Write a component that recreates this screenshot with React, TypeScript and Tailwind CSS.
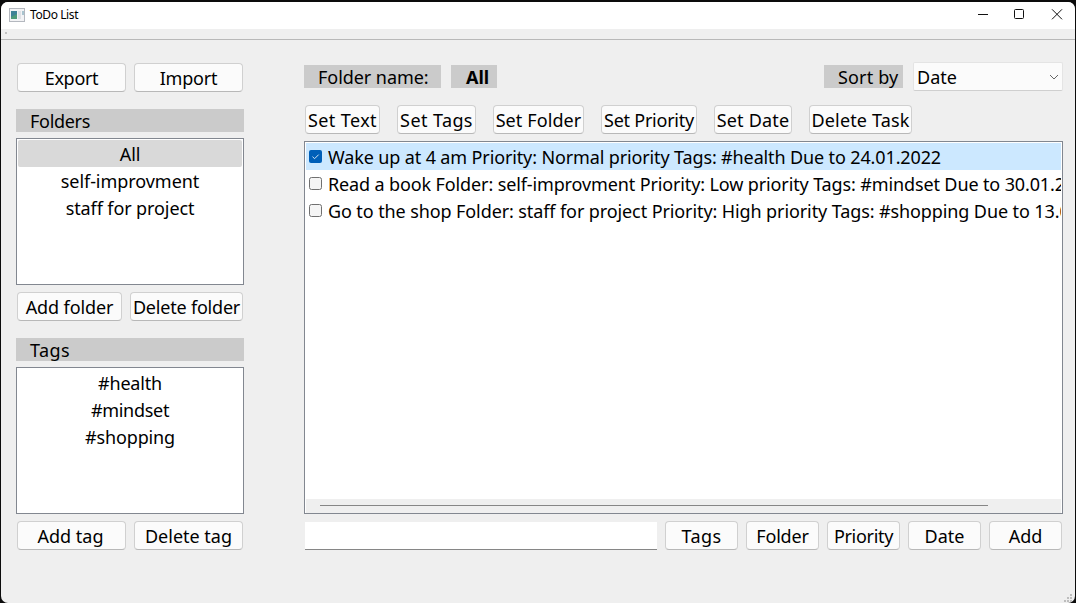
import { useState } from 'react';

const uiFont = "font-['Noto_Sans','Open_Sans',sans-serif]";

function Button({ label, className, spacing = 'tracking-[-0.3px]' }: { label: string; className: string; spacing?: string }) {
  return (
    <button
      className={`flex h-[29px] shrink-0 items-center justify-center whitespace-nowrap rounded-[4px] border border-[#d0d0d0] border-b-[#b8b8b8] bg-[#fbfbfb] pt-px text-[18px] leading-none ${className}`}
    >
      <span className={spacing}>{label}</span>
    </button>
  );
}

function Caption({ text, className, spacing = 'tracking-[-0.3px]' }: { text: string; className: string; spacing?: string }) {
  return (
    <div className={`flex h-[23px] shrink-0 items-center whitespace-nowrap bg-[#cbcbcb] pl-[14px] text-[18px] leading-none ${className}`}>
      <span className={spacing}>{text}</span>
    </div>
  );
}

type Item = { text: string; spacing: string };

function ListBox({ items, selected }: { items: Item[]; selected?: number }) {
  return (
    <ul className="h-[147px] w-[228px] shrink-0 border border-[#828790] bg-white p-px">
      {items.map((item, i) => (
        <li
          key={item.text}
          className={`flex h-[27px] items-center justify-center rounded-[2px] pt-px text-[18px] leading-none ${i === selected ? 'bg-[#d9d9d9]' : ''}`}
        >
          <span className={item.spacing}>{item.text}</span>
        </li>
      ))}
    </ul>
  );
}

function CheckBox({ checked }: { checked: boolean }) {
  return (
    <svg width="13" height="13" viewBox="0 0 13 13" className="shrink-0">
      {checked ? (
        <>
          <rect width="13" height="13" rx="2" fill="#005fb8" />
          <path d="M3.5 6.7 5.6 8.7 9.7 4.6" fill="none" stroke="#d5e6f5" strokeWidth="1" />
        </>
      ) : (
        <rect x="0.5" y="0.5" width="12" height="12" rx="2" fill="#f5f5f5" stroke="#707070" />
      )}
    </svg>
  );
}

const folders: Item[] = [
  { text: 'All', spacing: 'tracking-[-0.1px]' },
  { text: 'self-improvment', spacing: 'tracking-[-0.05px]' },
  { text: 'staff for project', spacing: 'tracking-[-0.1px]' },
];

const tags: Item[] = [
  { text: '#health', spacing: 'tracking-[-0.2px]' },
  { text: '#mindset', spacing: 'tracking-[-0.3px]' },
  { text: '#shopping', spacing: 'tracking-[-0.15px]' },
];

const initialTasks = [
  { text: 'Wake up at 4 am Priority: Normal priority Tags: #health Due to 24.01.2022', done: true, spacing: 'tracking-[-0.13px]' },
  { text: 'Read a book Folder: self-improvment Priority: Low priority Tags: #mindset Due to 30.01.2022', done: false, spacing: 'tracking-[-0.125px]' },
  { text: 'Go to the shop Folder: staff for project Priority: High priority Tags: #shopping Due to 13.01.2022', done: false, spacing: 'tracking-[-0.1px]' },
];

function TitleBar() {
  return (
    <header className="flex h-[27px] shrink-0 items-center bg-white pl-2">
      <svg width="16" height="14" viewBox="0 0 16 14" className="-mt-[2px]">
        <rect x="0.5" y="0.5" width="15" height="13" fill="#f3f3f5" stroke="#b4b8bf" />
        <rect x="2" y="3" width="6" height="8" fill="#3f8296" />
        <path d="M2 9l6-3v5H2z" fill="#4f9a78" />
        <rect x="9" y="3" width="3" height="8" fill="#dfe1e5" />
        <rect x="13" y="3" width="2" height="4" fill="#a9c4cf" />
      </svg>
      <span className="-mt-[2px] ml-[5px] text-[12px] leading-none tracking-[-0.4px]">ToDo List</span>
      <svg width="98" height="27" viewBox="0 0 98 27" className="ml-auto mr-[7px]" fill="none" stroke="#111">
        <path d="M8 12.5h10" />
        <rect x="44.5" y="7.5" width="9" height="9" rx="1" />
        <path d="M82 7.3l10 10M92 7.3l-10 10" />
      </svg>
    </header>
  );
}

export default function App() {
  const [tasks] = useState(initialTasks);
  return (
    <div className={`h-[603px] w-[1076px] overflow-hidden bg-[#0c0c0c] px-px pt-[2px] text-black ${uiFont}`}>
      <div className="relative flex h-[601px] flex-col overflow-hidden rounded-[7px] bg-[#efefef]">
        <TitleBar />
        <div className="h-[11px] shrink-0 border-b border-[#b8b8b8] pl-1 pt-[3px]">
          <div className="h-[2px] w-[2px] bg-[#c2c2c2]" />
        </div>

        <main className="flex items-start gap-[60px] pl-[15px] pt-[22px]">
          <aside className="flex w-[228px] shrink-0 flex-col">
            <div className="mt-px flex gap-2 pl-px">
              <Button label="Export" className="w-[109px]" />
              <Button label="Import" className="w-[109px]" spacing="tracking-[-0.2px]" />
            </div>
            <Caption text="Folders" className="mt-[17px]" />
            <div className="h-[6px]" />
            <ListBox items={folders} selected={0} />
            <div className="mt-[7px] flex gap-2 pl-px">
              <Button label="Add folder" className="w-[105px]" spacing="tracking-[-0.1px]" />
              <Button label="Delete folder" className="w-[113px]" spacing="tracking-[-0.2px]" />
            </div>
            <Caption text="Tags" className="mt-[17px]" spacing="tracking-[0.4px]" />
            <div className="h-[6px]" />
            <ListBox items={tags} />
            <div className="mt-[7px] flex gap-2 pl-px">
              <Button label="Add tag" className="w-[109px] pr-[2px]" spacing="tracking-[0px]" />
              <Button label="Delete tag" className="w-[109px]" spacing="tracking-[0px]" />
            </div>
          </aside>

          <section className="flex w-[759px] shrink-0 flex-col">
            <div className="flex h-[29px] items-center">
              <Caption text="Folder name:" className="w-[137px]" spacing="tracking-[-0.05px]" />
              <Caption text="All" className="ml-[10px] w-[46px] pl-[15px] font-bold" spacing="tracking-[0px]" />
              <Caption text="Sort by" className="ml-auto w-[79px]" spacing="tracking-[0.15px]" />
              <div className="ml-[10px] flex h-[29px] w-[150px] items-center justify-between rounded-[2px] border border-[#e4e4e4] border-b-[#cfcfcf] bg-[#fbfbfb] pl-[3px] pr-[3px] text-[18px] leading-none">
                <span className="tracking-[0px]">Date</span>
                <svg width="10" height="6" viewBox="0 0 10 6" fill="none" stroke="#666">
                  <path d="M1 1l4 4 4-4" />
                </svg>
              </div>
            </div>

            <div className="mt-[14px] flex gap-[17px] pl-px">
              <Button label="Set Text" className="w-[75px]" spacing="tracking-[0.4px]" />
              <Button label="Set Tags" className="w-[79px]" spacing="tracking-[0.4px]" />
              <Button label="Set Folder" className="w-[91px]" spacing="tracking-[0.1px]" />
              <Button label="Set Priority" className="w-[96px]" spacing="tracking-[-0.25px]" />
              <Button label="Set Date" className="w-[78px]" spacing="tracking-[0.2px]" />
              <Button label="Delete Task" className="w-[103px]" spacing="tracking-[0.15px]" />
            </div>

            <div className="mt-[7px] flex h-[373px] flex-col border border-[#828790] bg-white">
              <ul className="grow overflow-hidden px-px pt-px">
                {tasks.map((task, i) => (
                  <li
                    key={task.text}
                    className={`flex h-[27px] items-center gap-[6px] overflow-hidden whitespace-nowrap pl-[3px] text-[18px] leading-none ${i === 0 ? 'bg-[#cce8ff]' : ''}`}
                  >
                    <CheckBox checked={task.done} />
                    <span className={task.spacing}>{task.text}</span>
                  </li>
                ))}
              </ul>
              <div className="mx-px h-[14px] shrink-0 bg-[#efefef] pl-[14px] pt-[6px]">
                <div className="h-px w-[668px] bg-[#868686]" />
              </div>
            </div>

            <div className="mt-[7px] flex gap-2 pl-px">
              <input className="mt-px h-[28px] w-[352px] shrink-0 border-b border-[#868686] bg-white px-1 text-[18px] outline-none" />
              <Button label="Tags" className="w-[73px]" spacing="tracking-[0.4px]" />
              <Button label="Folder" className="w-[73px]" spacing="tracking-[-0.2px]" />
              <Button label="Priority" className="w-[73px]" spacing="tracking-[-0.3px]" />
              <Button label="Date" className="w-[73px]" spacing="tracking-[0px]" />
              <Button label="Add" className="w-[73px]" spacing="tracking-[-0.1px]" />
            </div>
          </section>
        </main>

        <svg width="8" height="8" viewBox="0 0 8 8" className="absolute bottom-[1px] right-[3px]" fill="#bdbdbd">
          <path d="M6 0h2v2H6zM3 3h2v2H3zM6 3h2v2H6zM0 6h2v2H0zM3 6h2v2H3zM6 6h2v2H6z" />
        </svg>
      </div>
    </div>
  );
}
